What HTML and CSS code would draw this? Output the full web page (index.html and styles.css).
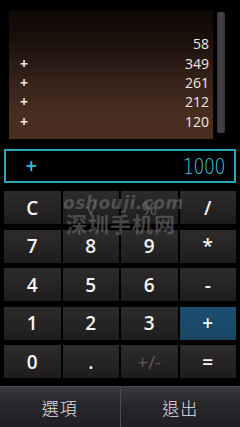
FILE: index.html
```html
<!DOCTYPE html>
<html>
<head>
<meta charset="utf-8">
<link rel="stylesheet" href="styles.css">
</head>
<body>
<div class="screen">
  <div class="top">
    <div class="tape">
      <div class="row"><span class="op"></span><span class="num">58</span></div>
      <div class="row"><span class="op">+</span><span class="num">349</span></div>
      <div class="row"><span class="op">+</span><span class="num">261</span></div>
      <div class="row"><span class="op">+</span><span class="num">212</span></div>
      <div class="row"><span class="op">+</span><span class="num">120</span></div>
    </div>
    <div class="scroll"></div>
  </div>
  <div class="display">
    <span class="dop">+</span>
    <span class="dval">1000</span>
  </div>
  <div class="pad">
    <div class="key">C</div>
    <div class="key dim">√</div>
    <div class="key dim">%</div>
    <div class="key">/</div>
    <div class="key">7</div>
    <div class="key">8</div>
    <div class="key">9</div>
    <div class="key">*</div>
    <div class="key">4</div>
    <div class="key">5</div>
    <div class="key">6</div>
    <div class="key">-</div>
    <div class="key">1</div>
    <div class="key">2</div>
    <div class="key">3</div>
    <div class="key active">+</div>
    <div class="key">0</div>
    <div class="key">.</div>
    <div class="key dim">+/-</div>
    <div class="key">=</div>
    <div class="watermark">
      <div class="wm1">oshouji.com</div>
      <div class="wm2">深圳手机网</div>
    </div>
  </div>
  <div class="softkeys">
    <div class="sk">選項</div>
    <div class="sk">退出</div>
  </div>
</div>
</body>
</html>
```
FILE: styles.css
```css
html, body {
  margin: 0;
  padding: 0;
  background: #000;
}
.screen {
  width: 240px;
  height: 427px;
  background: #000;
  display: flex;
  flex-direction: column;
  overflow: hidden;
  font-family: "DejaVu Sans", "Noto Sans CJK TC", sans-serif;
}
.top {
  display: flex;
  gap: 4px;
  padding: 10px 15px 0 9px;
  height: 129px;
}
.tape {
  flex: 1;
  height: 129px;
  background: linear-gradient(#0d0705 0%, #1a100b 22%, #35221a 55%, #472d20 80%, #4a2f21 100%);
  display: flex;
  flex-direction: column;
  justify-content: flex-end;
  padding: 0 4px 8px 11px;
  box-sizing: border-box;
}
.row {
  display: flex;
  justify-content: space-between;
  align-items: center;
  height: 19.4px;
  color: #efe9e4;
  font-family: "Open Sans", "DejaVu Sans", sans-serif;
  font-size: 14px;
}
.op {
  font-weight: bold;
  font-size: 14px;
}
.scroll {
  width: 8px;
  height: 121px;
  margin-top: 2px;
  background: linear-gradient(90deg, #3a383c, #46444a 50%, #38363a);
  border-radius: 2px;
}
.display {
  margin: 10px 4px 0 4px;
  height: 34px;
  border: 2px solid #26a9b8;
  box-sizing: border-box;
  display: flex;
  align-items: center;
  justify-content: space-between;
  padding: 0 9px 0 19px;
  color: #2cc3d2;
}
.dop {
  font-weight: bold;
  font-size: 15px;
}
.dval {
  font-family: "DejaVu Sans", sans-serif;
  font-weight: 300;
  font-size: 22px;
  letter-spacing: -0.5px;
  color: #48d2e0;
  transform: scaleX(0.78);
  transform-origin: right center;
}
.pad {
  position: relative;
  margin: 8px 4px 0 4px;
  display: grid;
  grid-template-columns: repeat(4, 1fr);
  grid-auto-rows: 33px;
  column-gap: 2px;
  row-gap: 5.5px;
}
.key {
  background: linear-gradient(#2d2b2c, #1e1c1d);
  color: #f4f4f4;
  display: flex;
  align-items: center;
  justify-content: center;
  font-family: "Open Sans", "DejaVu Sans", sans-serif;
  font-weight: 600;
  font-size: 19px;
}
.key.dim {
  color: #5c5a5c;
  font-weight: 400;
}
.key.active {
  background: linear-gradient(#1c4e6f, #184564);
}
.watermark {
  position: absolute;
  left: 59px;
  top: 3px;
  width: 116px;
  text-align: center;
  color: rgba(120, 120, 120, 0.55);
  pointer-events: none;
}
.wm1 {
  font-family: "DejaVu Sans", sans-serif;
  font-style: italic;
  font-weight: bold;
  font-size: 17px;
  line-height: 18px;
  letter-spacing: 0.5px;
}
.wm2 {
  font-family: "Noto Sans CJK SC", sans-serif;
  font-weight: bold;
  font-size: 21px;
  line-height: 22px;
  letter-spacing: 1px;
}
.softkeys {
  margin-top: auto;
  height: 41px;
  display: flex;
  background: linear-gradient(#3a3a3f, #28282c 40%, #1f1f23);
  border-top: 1px solid #4a4a50;
  box-sizing: border-box;
}
.sk {
  flex: 1;
  display: flex;
  align-items: center;
  justify-content: center;
  color: #e2e2e4;
  font-family: "Noto Sans CJK TC", sans-serif;
  font-weight: 300;
  font-size: 17px;
  letter-spacing: 1px;
}
.sk + .sk {
  border-left: 1px solid #4a4a50;
}
```
